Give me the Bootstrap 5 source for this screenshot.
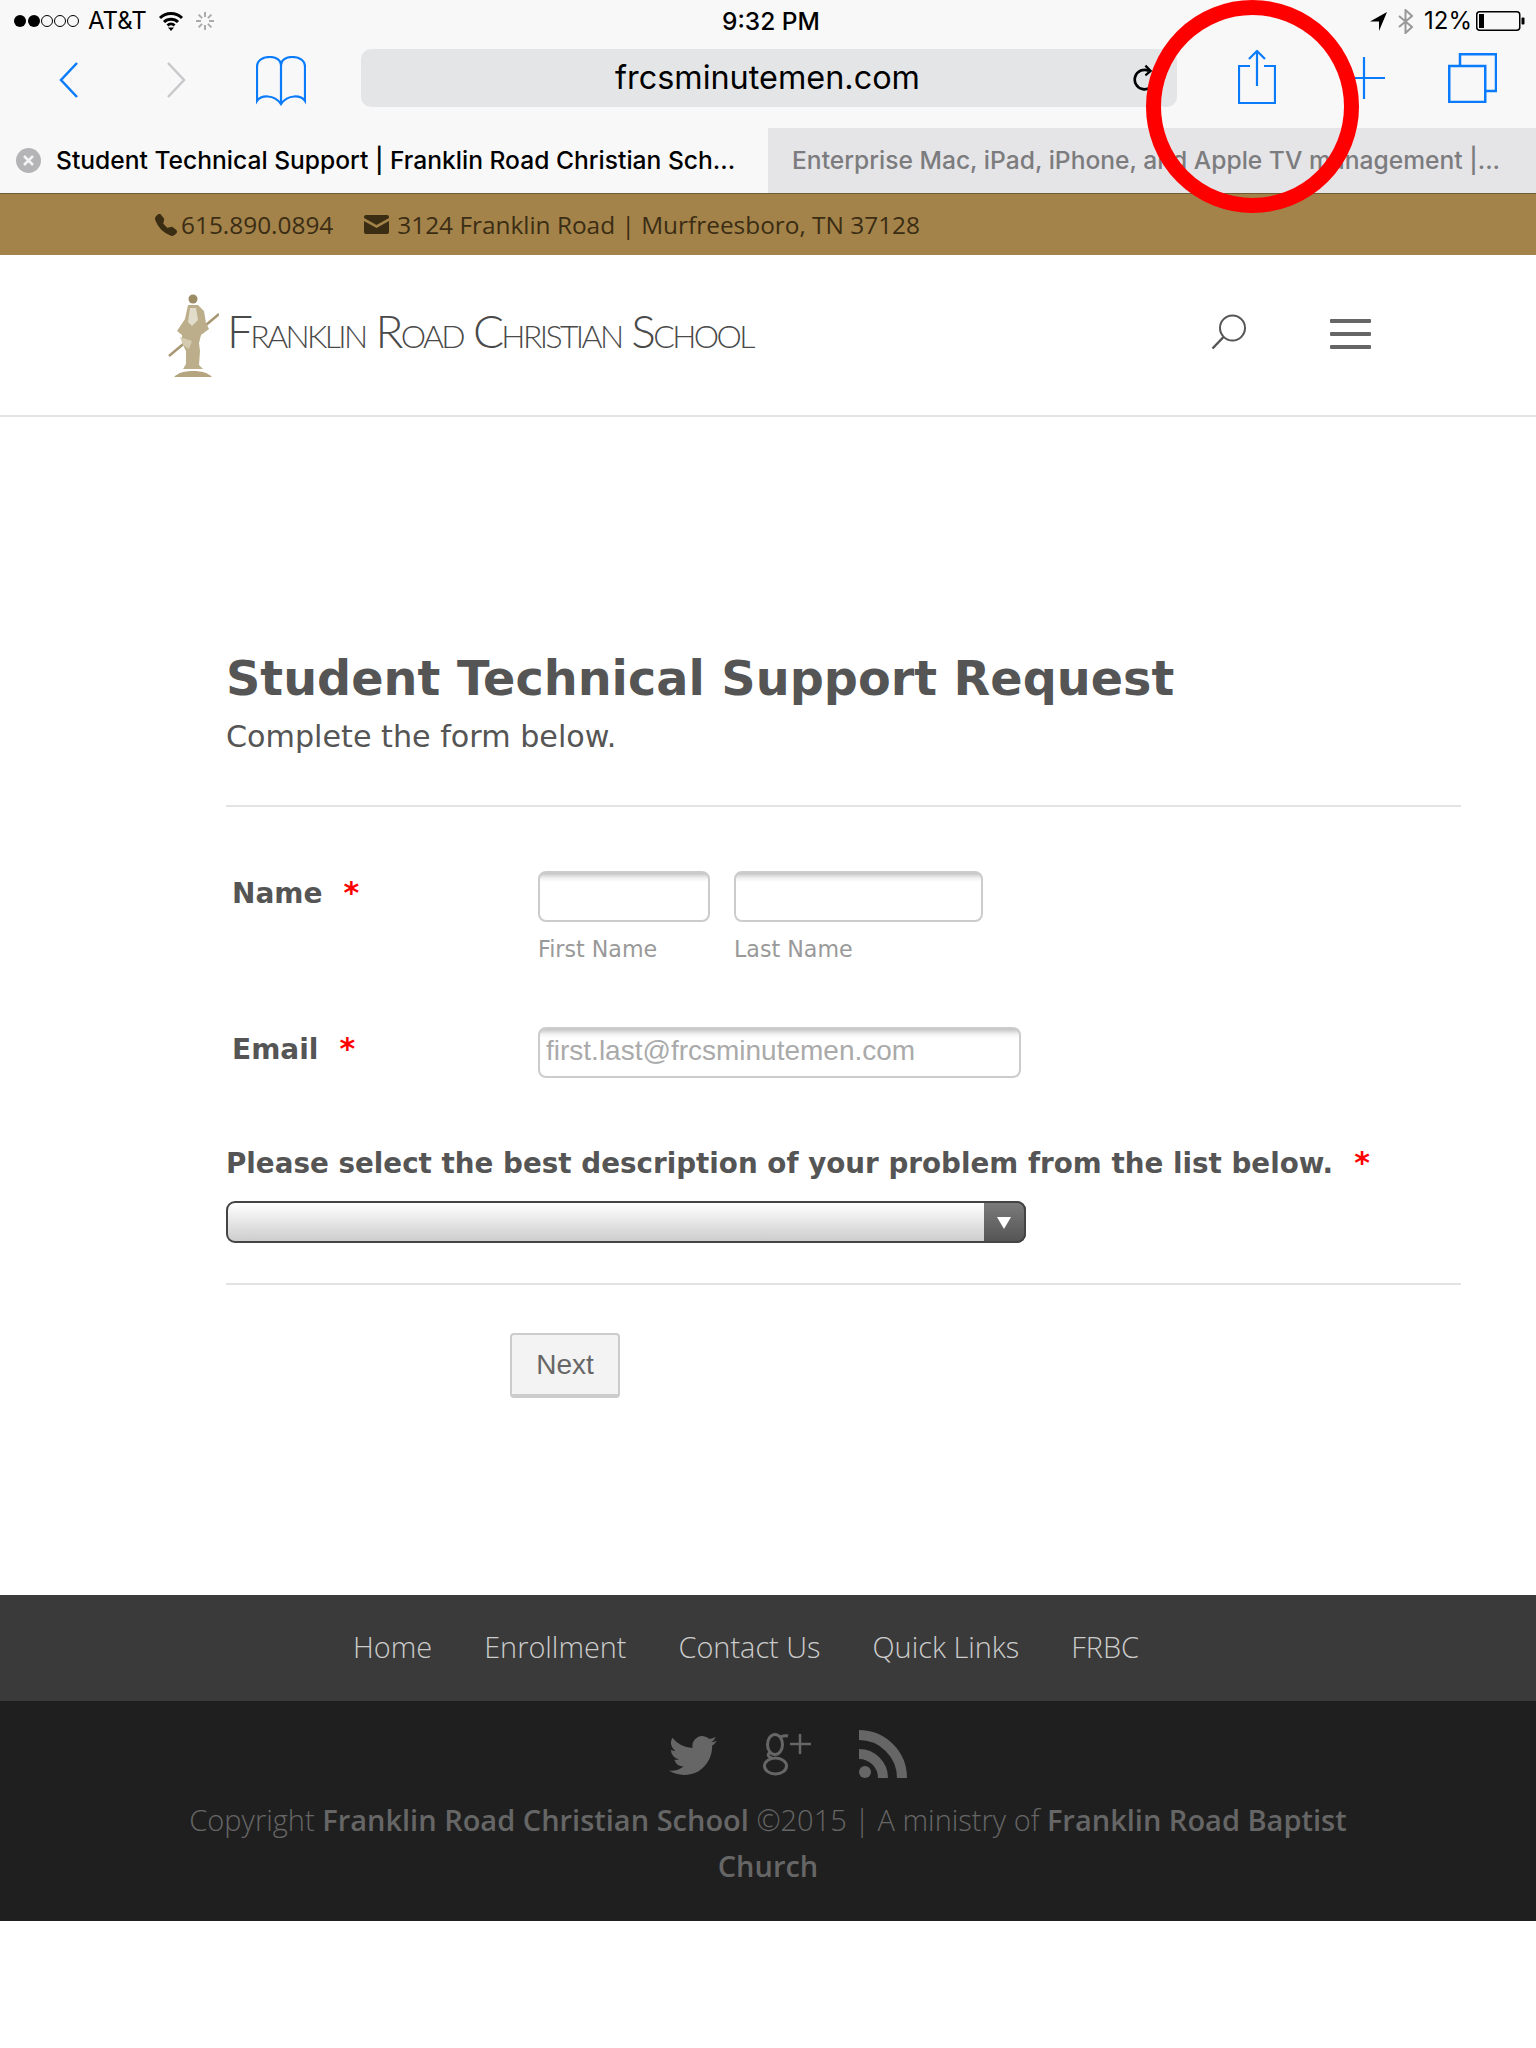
<!DOCTYPE html>
<html lang="en">
<head>
<meta charset="utf-8">
<title>Student Technical Support</title>
<link href="https://cdn.jsdelivr.net/npm/bootstrap@5.3.0/dist/css/bootstrap.min.css" rel="stylesheet">
<style>
html,body{background:#fff;margin:0}
body{width:1536px;height:2048px;overflow:hidden;position:relative;font-family:"DejaVu Sans",sans-serif;color:#555}
.chrome{background:#f8f8f8;height:128px;font-family:Inter,sans-serif;color:#000}
.statusrow{height:42px;padding-left:13px;font-size:24px;line-height:42px}
.statusleft{width:709px;gap:7px}
.clock{width:100px;font-weight:500;font-size:24.500px;white-space:nowrap}
.statusright{margin-left:auto;padding-right:11px;gap:11px}
.battery{margin-left:-7px}
.toolrow{height:86px}
.tool-back{margin:20px 0 0 59px;display:block}
.tool-fwd{margin:20px 0 0 89px;display:block}
.tool-book{margin:14px 0 0 70px;display:block}
.urlbar{width:816px;height:58px;margin:7px 0 0 55px;background:#e4e5e7;border-radius:10px;font-size:32.400px;line-height:58px;text-align:center;padding-right:3px;position:relative}
.tool-reload{position:absolute;right:21px;top:14px}
.tool-share{margin:8px 0 0 61px;display:block}
.tool-plus{margin:15px 0 0 67px;display:block}
.tool-tabs{margin:11px 0 0 63px;display:block}
.tabrow{height:66px;font-family:Inter,sans-serif;font-size:24.600px;font-weight:500;line-height:65px;border-bottom:1px solid #6f5c34}
.tabon{width:768px;background:#f8f8f8;color:#000;padding-left:16px;gap:15px;white-space:nowrap}
.taboff{width:768px;background:#e5e5e8;color:#7c7c7e;padding-left:24px;white-space:nowrap}
.topbar{height:61px;background:#a3834a;color:#3b2d14;font-family:"Open Sans",sans-serif;font-size:24.400px;line-height:60px;padding-left:155px;white-space:nowrap}
.topbar svg{flex:none}
.topgap{margin-left:31px}
.sitehead{height:162px;border-bottom:2px solid #e4e4e4;padding-left:168px}
.logotext{font-family:Lato,sans-serif;font-weight:300;font-variant:small-caps;font-size:46px;letter-spacing:-2.620px;color:#4a4a4a;margin-left:8px;margin-top:-9px;white-space:nowrap}
.headicons{margin-left:auto;padding-right:165px;gap:83px;margin-top:-3px}
.searchglyph{margin-top:-3px}
.burger{width:41px;display:flex;flex-direction:column;gap:9px}
.burger span{display:block;height:4px;background:#666;border-radius:1px}
.formarea{padding:232px 75px 0 226px}
.pagetitle{font-size:47.700px;line-height:60px;font-weight:700;margin:0;color:#555;white-space:nowrap}
.pagesub{font-size:30.200px;line-height:40px;margin:8px 0 0;color:#555}
.rule{border:0;border-top:2px solid #e3e3e3;opacity:1;margin:0}
.rule-a{margin-top:48px}
.rule-b{margin-top:40px}
.fieldrow{margin-top:64px}
.fieldrow2{margin-top:63px}
.fieldlabel{width:312px;padding-left:6px;font-size:28px;font-weight:700;line-height:44px;color:#555}
.req{color:#f00;margin-left:21px;font-size:30px}
.softinput{height:51px;border:2px solid #ccc;border-radius:8px;background:linear-gradient(#c4c4c4 0,#f0f0f0 5px,#fff 9px);padding:0 6px 3px;font-family:"Liberation Sans",sans-serif;font-size:28px;color:#aaa;display:block}
.softinput::placeholder{color:#aaa;opacity:1}
.w-first{width:172px}
.w-last{width:249px}
.w-mail{width:483px}
.sublabel{font-size:22.200px;line-height:30px;color:#999;margin-top:12px;display:block}
.question{font-size:27.780px;font-weight:700;line-height:36px;margin-top:67px;color:#555;white-space:nowrap}
.req2{margin-left:21px}
.selectwrap{width:800px;height:42px;margin-top:19px;position:relative}
.fakeselect{width:800px;height:42px;border:2px solid #444;border-radius:9px;background:linear-gradient(#fff,#cdcdcd);appearance:none;display:block;padding:0}
.selectwrap::after{content:"";position:absolute;right:0;top:0;width:42px;height:42px;background:linear-gradient(#7b7b7b,#555);border:2px solid #444;border-left:0;border-radius:0 9px 9px 0}
.selectarrow{position:absolute;right:15px;top:16px;z-index:1;width:0;height:0;border-left:7px solid transparent;border-right:7px solid transparent;border-top:12px solid #fff}
.nextbtn{margin:48px 0 0 284px;width:110px;height:65px;background:#f3f3f3;border:2px solid #ccc;border-bottom-width:4px;border-radius:4px;font-family:"Liberation Sans",sans-serif;font-size:28px;color:#666;padding:0;display:block}
.footnav{margin-top:197px;height:106px;background:#3a3a3a;color:#ccc;font-family:"Open Sans",sans-serif;font-weight:300;font-size:28.900px;padding:22px 44px 0 0;line-height:60px;gap:52px}
.footbase{height:220px;background:#1f1f1f;color:#666;font-family:"Open Sans",sans-serif;font-weight:300;font-size:29px;line-height:46px;text-align:center;padding-top:29px}
.footicons{gap:46px;height:48px;margin-bottom:19px;padding-left:40px}
.footbase strong{font-weight:600;color:#666}
.redring{position:absolute;left:1146px;top:0;z-index:5;pointer-events:none}
</style>
</head>
<body>
<div class="chrome">
  <div class="statusrow d-flex align-items-center">
    <div class="statusleft d-flex align-items-center">
      <svg width="68" height="14" viewBox="0 0 68 14"><circle cx="7" cy="7" r="6" fill="#000"/><circle cx="21" cy="7" r="6" fill="#000"/><circle cx="34" cy="7" r="5.500" fill="none" stroke="#000"/><circle cx="47" cy="7" r="5.500" fill="none" stroke="#000"/><circle cx="60" cy="7" r="5.500" fill="none" stroke="#000"/></svg>
      <span>AT&amp;T</span>
      <svg class="ms-1" width="26" height="20" viewBox="0 0 26 20" fill="none" stroke="#000" stroke-width="3"><path d="M2 7a16 16 0 0 1 22 0"/><path d="M6 11a10 10 0 0 1 14 0"/><path d="M9.500 14.500a5 5 0 0 1 7 0"/><path d="M13 20l-3-3.500h6z" fill="#000" stroke="none"/></svg>
      <svg class="ms-1" width="20" height="20" viewBox="0 0 20 20" stroke="#aaa" stroke-width="2"><path d="M10 1v5M10 14v5M1 10h5M14 10h5M3.600 3.600l3.500 3.500M12.900 12.900l3.500 3.500M3.600 16.400l3.500-3.500M12.900 7.100l3.500-3.500"/></svg>
    </div>
    <div class="clock">9:32 PM</div>
    <div class="statusright d-flex align-items-center">
      <svg width="17" height="19" viewBox="0 0 17 19"><path d="M17 0L0 9.500h9V19z" fill="#000"/></svg>
      <svg width="15" height="25" viewBox="0 0 15 25" fill="none" stroke="#999" stroke-width="2"><path d="M1 7l13 11-6.500 6V1L14 7 1 18"/></svg>
      <span>12%</span>
      <svg class="battery" width="49" height="20" viewBox="0 0 49 20"><rect x=".75" y=".75" width="43" height="18.500" rx="3" fill="none" stroke="#000" stroke-width="1.500"/><rect x="3" y="3" width="5" height="14" fill="#000"/><rect x="45.500" y="6.500" width="3" height="7" rx="1" fill="#000"/></svg>
    </div>
  </div>
  <div class="toolrow d-flex">
    <svg class="tool-back" width="19" height="36" viewBox="0 0 19 36" fill="none" stroke="#0a7bfb" stroke-width="2.500"><path d="M18 1L2 18l16 17"/></svg>
    <svg class="tool-fwd" width="19" height="36" viewBox="0 0 19 36" fill="none" stroke="#c8c8cb" stroke-width="2.500"><path d="M1 1l16 17L1 35"/></svg>
    <svg class="tool-book" width="50" height="50" viewBox="0 0 50 50" fill="none" stroke="#0a7bfb" stroke-width="2.200"><path d="M25 9C25 4 20 1 14 1 7 1 1 4 1 11v34c4-6 17-7 24 3 7-10 20-9 24-3V11c0-7-6-10-13-10-6 0-11 3-11 8v39"/></svg>
    <div class="urlbar">frcsminutemen.com
      <svg class="tool-reload" width="23" height="30" viewBox="0 0 26 30" fill="none" stroke="#000" stroke-width="3"><path d="M18 7a11 11 0 1 0 6 10"/><path d="M14 1l6 6-6 5" stroke-width="2.500"/></svg>
    </div>
    <svg class="tool-share" width="38" height="54" viewBox="0 0 38 54" fill="none" stroke="#0a7bfb" stroke-width="2.200"><path d="M12 16H1v37h36V16H26"/><path d="M19 36V2M11 9l8-8 8 8"/></svg>
    <svg class="tool-plus" width="42" height="42" viewBox="0 0 42 42" stroke="#0a7bfb" stroke-width="2.200"><path d="M21 0v42M0 21h42"/></svg>
    <svg class="tool-tabs" width="49" height="50" viewBox="0 0 49 50" fill="none" stroke="#0a7bfb" stroke-width="2.500"><rect x="1.250" y="13" width="36" height="36"/><path d="M12 13V1.250h36V38H38"/></svg>
  </div>
</div>
<div class="tabrow d-flex">
  <div class="tabon d-flex align-items-center">
    <svg width="25" height="25" viewBox="0 0 25 25"><circle cx="12.500" cy="12.500" r="12.500" fill="#b4b4b6"/><path d="M8 8l9 9M17 8l-9 9" stroke="#f4f4f4" stroke-width="2.500"/></svg>
    <span>Student Technical Support | Franklin Road Christian Sch...</span>
  </div>
  <div class="taboff">Enterprise Mac, iPad, iPhone, and Apple TV management |...</div>
</div>
<div class="topbar d-flex align-items-center">
  <svg width="22" height="22" viewBox="0 0 16 16" fill="#3b2d14"><path d="M1.885.511a1.745 1.745 0 0 1 2.61.163L6.29 2.98c.329.423.445.974.315 1.494l-.547 2.19a.678.678 0 0 0 .178.643l2.457 2.457a.678.678 0 0 0 .644.178l2.189-.547a1.745 1.745 0 0 1 1.494.315l2.306 1.794c.829.645.905 1.87.163 2.611l-1.034 1.034c-.74.74-1.846 1.065-2.877.702a18.634 18.634 0 0 1-7.01-4.42 18.634 18.634 0 0 1-4.42-7.009c-.362-1.03-.037-2.137.703-2.877L1.885.511z"/></svg>
  <span class="ms-1">615.890.0894</span>
  <svg class="topgap" width="25" height="19" viewBox="0 0 25 19" fill="#3b2d14"><path d="M2 0h21a2 2 0 0 1 2 2v1L12.500 10 0 3V2a2 2 0 0 1 2-2z"/><path d="M0 6l12.500 7L25 6v11a2 2 0 0 1-2 2H2a2 2 0 0 1-2-2z"/></svg>
  <span class="ms-2">3124 Franklin Road | Murfreesboro, TN 37128</span>
</div>
<header class="sitehead d-flex align-items-center">
  <svg width="51" height="84" viewBox="0 0 51 84">
    <path d="M51 21L1 63" stroke="#a89873" stroke-width="2.500"/>
    <circle cx="25" cy="6" r="4.500" fill="#9c8c66"/>
    <path d="M20 12l10 0 6 6 2 12 3 6-8 6-2 8 1 8-1 14 4 4H15l3-5 0-13-4-8 0-8-5-4 8-12z" fill="#bcae8a"/>
    <path d="M22 15l6 0 2 12-6 6-4-4z" fill="#e2dccb"/>
    <path d="M12 44l12 4-3 8-6-4z" fill="#d4cab0"/>
    <path d="M6 84c4-4 10-6 19-6s15 2 19 6z" fill="#b5a57e"/>
  </svg>
  <div class="logotext">Franklin Road Christian School</div>
  <div class="headicons d-flex align-items-center">
    <svg class="searchglyph" width="36" height="36" viewBox="0 0 36 36" fill="none" stroke="#555" stroke-width="2"><circle cx="21.500" cy="14" r="12.500"/><path d="M12.500 23L1.500 34.500" stroke-width="2.500"/></svg>
    <div class="burger"><span></span><span></span><span></span></div>
  </div>
</header>
<main class="formarea">
  <h1 class="pagetitle">Student Technical Support Request</h1>
  <p class="pagesub">Complete the form below.</p>
  <hr class="rule rule-a">
  <div class="fieldrow d-flex">
    <div class="fieldlabel">Name<span class="req">*</span></div>
    <div class="d-flex gap-4">
      <label><input class="softinput w-first" type="text"><span class="sublabel">First Name</span></label>
      <label><input class="softinput w-last" type="text"><span class="sublabel">Last Name</span></label>
    </div>
  </div>
  <div class="fieldrow2 d-flex">
    <div class="fieldlabel">Email<span class="req">*</span></div>
    <input class="softinput w-mail" type="text" placeholder="first.last@frcsminutemen.com">
  </div>
  <div class="question">Please select the best description of your problem from the list below.<span class="req req2">*</span></div>
  <div class="selectwrap"><select class="fakeselect" aria-label="Problem"><option></option></select><span class="selectarrow"></span></div>
  <hr class="rule rule-b">
  <button class="nextbtn btn" type="button">Next</button>
</main>
<nav class="footnav d-flex justify-content-center">
  <span>Home</span><span>Enrollment</span><span>Contact Us</span><span>Quick Links</span><span>FRBC</span>
</nav>
<footer class="footbase">
  <div class="footicons d-flex justify-content-center align-items-center">
    <svg width="48" height="48" viewBox="0 0 16 16" fill="#666"><path d="M5.026 15c6.038 0 9.341-5.003 9.341-9.334 0-.14 0-.282-.006-.422A6.685 6.685 0 0 0 16 3.542a6.658 6.658 0 0 1-1.889.518 3.301 3.301 0 0 0 1.447-1.817 6.533 6.533 0 0 1-2.087.793A3.286 3.286 0 0 0 7.875 6.03a9.325 9.325 0 0 1-6.767-3.429 3.289 3.289 0 0 0 1.018 4.382A3.323 3.323 0 0 1 .64 6.575v.045a3.288 3.288 0 0 0 2.632 3.218 3.203 3.203 0 0 1-.865.115 3.23 3.23 0 0 1-.614-.057 3.283 3.283 0 0 0 3.067 2.277A6.588 6.588 0 0 1 .78 13.58a6.32 6.32 0 0 1-.78-.045A9.344 9.344 0 0 0 5.026 15z"/></svg>
    <svg width="50" height="44" viewBox="0 0 50 44" fill="none" stroke="#666" stroke-width="3"><ellipse cx="12" cy="12.500" rx="7.500" ry="10"/><ellipse cx="12.500" cy="34" rx="11" ry="8"/><path d="M7 20c-3 3-2 5 2 6M17 5c3-1 5-2 8-1"/><path d="M37 2v20M27 12h21" stroke-width="2.500"/></svg>
    <svg width="48" height="48" viewBox="0 0 48 48" fill="none" stroke="#666" stroke-width="10"><path d="M0 5a43 43 0 0 1 43 43M0 24a24 24 0 0 1 24 24"/><circle cx="6" cy="42" r="6" fill="#666" stroke="none"/></svg>
  </div>
  <div>Copyright <strong>Franklin Road Christian School</strong> ©2015 | A ministry of <strong>Franklin Road Baptist</strong><br><strong>Church</strong></div>
</footer>
<svg class="redring" width="213" height="214" viewBox="0 0 213 214" fill="none" stroke="#f00" stroke-width="15"><circle cx="106.500" cy="106.500" r="99"/></svg>
<script src="https://cdn.jsdelivr.net/npm/bootstrap@5.3.0/dist/js/bootstrap.bundle.min.js"></script>
</body>
</html>
